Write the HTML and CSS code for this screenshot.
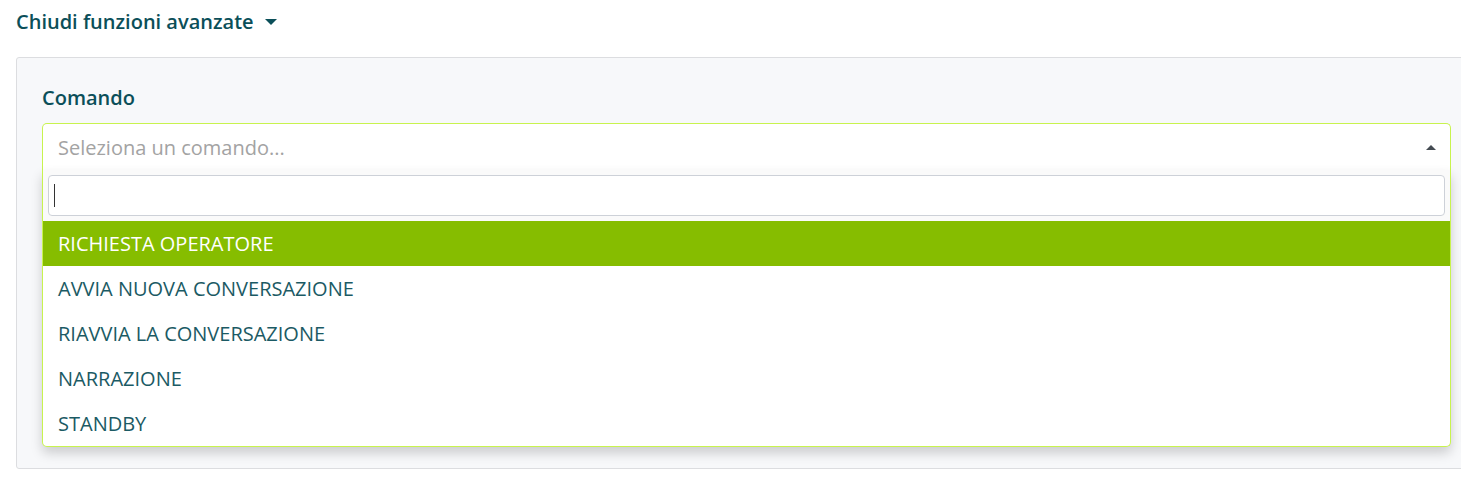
FILE: index.html
```html
<!DOCTYPE html>
<html lang="it">
<head>
<meta charset="utf-8">
<title>Comando</title>
<link rel="stylesheet" href="styles.css">
</head>
<body>
<div class="page">
  <button class="toggle" type="button">
    <span class="toggle-text">Chiudi funzioni avanzate</span>
    <span class="caret caret-down"></span>
  </button>
  <section class="panel">
    <label class="field-label">Comando</label>
    <div class="select">
      <div class="select-box">
        <span class="placeholder">Seleziona un comando...</span>
        <span class="caret caret-up"></span>
      </div>
      <div class="dropdown">
        <div class="search-wrap">
          <div class="search"><span class="cursor"></span></div>
        </div>
        <ul class="options">
          <li class="option active">RICHIESTA OPERATORE</li>
          <li class="option">AVVIA NUOVA CONVERSAZIONE</li>
          <li class="option">RIAVVIA LA CONVERSAZIONE</li>
          <li class="option">NARRAZIONE</li>
          <li class="option">STANDBY</li>
        </ul>
      </div>
    </div>
  </section>
</div>
</body>
</html>
```
FILE: styles.css
```css
html, body {
  margin: 0;
  padding: 0;
  background: #ffffff;
  overflow: hidden;
}
body {
  font-family: "Open Sans", "Liberation Sans", sans-serif;
  color: #0b4f59;
}
.page {
  padding: 8px 0 0 16px;
}
.toggle {
  display: flex;
  align-items: center;
  gap: 11px;
  background: none;
  border: 0;
  padding: 0;
  font-family: inherit;
  font-size: 20px;
  font-weight: 600;
  color: #0b4f59;
  line-height: 27px;
  cursor: pointer;
}
.caret {
  display: inline-block;
  width: 0;
  height: 0;
}
.caret-down {
  border-left: 6px solid transparent;
  border-right: 6px solid transparent;
  border-top: 6px solid #0b4f59;
  margin-top: 1px;
}
.caret-up {
  border-left: 5px solid transparent;
  border-right: 5px solid transparent;
  border-bottom: 5px solid #444b52;
}
.panel {
  margin-top: 22px;
  width: 1461px;
  height: 412px;
  box-sizing: border-box;
  border: 1px solid #dcdde0;
  border-radius: 3px;
  background: #f7f8fa;
  padding: 26px 25px 0 25px;
}
.field-label {
  display: block;
  font-size: 20px;
  font-weight: 600;
  line-height: 28px;
  color: #0b4f59;
  margin-bottom: 11px;
}
.select {
  position: relative;
  width: 1409px;
}
.select-box {
  box-sizing: border-box;
  height: 47px;
  border: 1px solid #c8f34e;
  border-bottom: 0;
  border-radius: 5px 5px 0 0;
  background: #ffffff;
  display: flex;
  align-items: center;
  justify-content: space-between;
  padding: 0 14px 0 15px;
}
.placeholder {
  font-size: 20px;
  color: #a3a3a3;
}
.dropdown {
  position: absolute;
  left: 0;
  right: 0;
  top: 47px;
  box-sizing: border-box;
  border: 1px solid #c8f34e;
  border-top: 0;
  border-radius: 0 0 5px 5px;
  background: #ffffff;
  box-shadow: 0 6px 12px rgba(0, 0, 0, 0.175);
  overflow: hidden;
}
.search-wrap {
  background: #fafafa;
  padding: 5px 5px 5px 5px;
}
.search {
  box-sizing: border-box;
  height: 41px;
  border: 1px solid #cdd1d8;
  border-radius: 4px;
  background: #ffffff;
  display: flex;
  align-items: center;
  padding-left: 5px;
}
.cursor {
  width: 1px;
  height: 23px;
  background: #333333;
}
.options {
  list-style: none;
  margin: 0;
  padding: 0;
}
.option {
  height: 45px;
  line-height: 45px;
  padding-left: 15px;
  font-size: 20px;
  color: #1b5a64;
}
.option.active {
  background: #86bd00;
  color: #ffffff;
}
```
